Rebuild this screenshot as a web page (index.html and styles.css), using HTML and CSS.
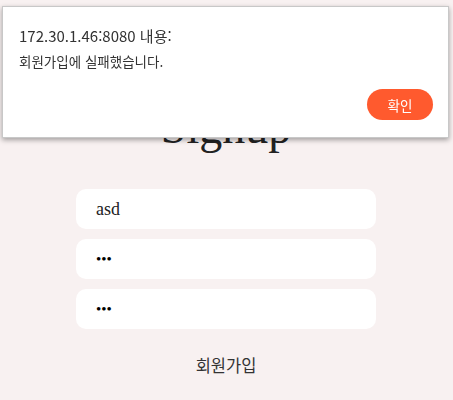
FILE: index.html
```html
<!DOCTYPE html>
<html lang="ko">
<head>
<meta charset="utf-8">
<link rel="stylesheet" href="styles.css">
</head>
<body>
<main class="page">
  <h1 class="title">Signup</h1>
  <form class="form">
    <input class="field" type="text" value="asd">
    <input class="field field-pw" type="password" value="abc">
    <input class="field field-pw" type="password" value="abc">
    <button class="submit" type="button">회원가입</button>
  </form>
</main>
<div class="dialog">
  <p class="dialog-title">172.30.1.46:8080 내용:</p>
  <p class="dialog-msg">회원가입에 실패했습니다.</p>
  <div class="dialog-actions">
    <button class="dialog-ok" type="button">확인</button>
  </div>
</div>
</body>
</html>
```
FILE: styles.css
```css
html, body {
  margin: 0;
  padding: 0;
  background: #f8f1f1;
  height: 100%;
}
body {
  font-family: "Liberation Serif", serif;
  color: #222;
}
.page {
  display: flex;
  flex-direction: column;
  align-items: center;
  padding-top: 100px;
  padding-right: 1px;
}
.title {
  margin: 0;
  font-weight: normal;
  font-size: 46px;
  line-height: 56px;
  color: #222;
}
.form {
  margin-top: 33px;
  width: 300px;
  display: flex;
  flex-direction: column;
  gap: 10px;
}
.field {
  box-sizing: border-box;
  height: 40px;
  width: 300px;
  border: none;
  border-radius: 10px;
  background: #fff;
  padding: 0 20px;
  font-family: "Liberation Serif", serif;
  font-size: 18px;
  color: #222;
  outline: none;
}
.field-pw {
  font-size: 15px;
  color: #000;
}
.submit {
  margin-top: 14px;
  align-self: center;
  background: transparent;
  border: none;
  font-family: "Noto Sans CJK KR", sans-serif;
  font-size: 16.5px;
  color: #333;
  padding: 0;
}
.dialog {
  position: fixed;
  top: 6px;
  left: 2px;
  width: 447px;
  height: 132px;
  box-sizing: border-box;
  background: #fff;
  border: 1px solid #c8c8c8;
  box-shadow: 0 2px 5px rgba(0,0,0,0.35);
  padding: 16px 15px 0 16px;
  font-family: "Noto Sans CJK KR", "Noto Sans", sans-serif;
  color: #333;
}
.dialog-title {
  margin: 0;
  font-size: 15px;
  line-height: 26px;
}
.dialog-msg {
  margin: 2px 0 0;
  font-size: 13.5px;
  line-height: 20px;
}
.dialog-actions {
  display: flex;
  justify-content: flex-end;
  margin-top: 18px;
}
.dialog-ok {
  width: 66px;
  height: 31px;
  border: none;
  border-radius: 16px;
  background: #ff5a2e;
  color: #fff;
  font-family: "Noto Sans CJK KR", sans-serif;
  font-size: 13.5px;
  padding: 0;
}
```
